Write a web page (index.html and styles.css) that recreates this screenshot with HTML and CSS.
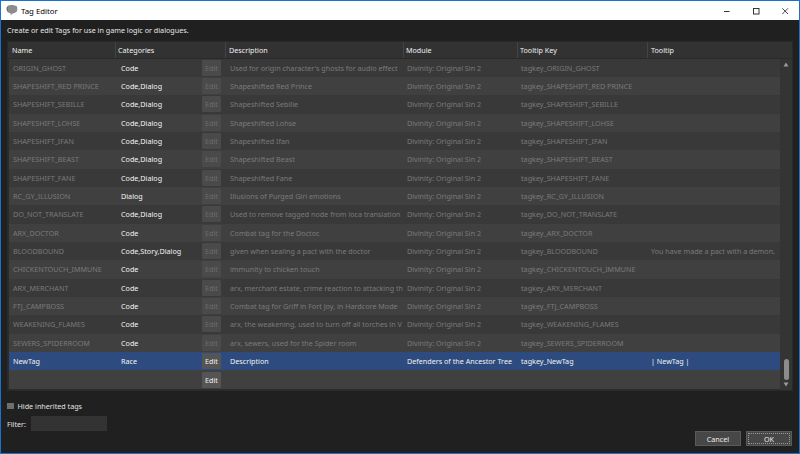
FILE: index.html
```html
<!DOCTYPE html>
<html>
<head>
<meta charset="utf-8">
<link rel="stylesheet" href="styles.css">
</head>
<body>
<div class="window">
  <div class="titlebar">
    <svg class="appicon" width="12" height="12" viewBox="0 0 12 12"><path d="M2 1.5 C4 0.5 8 0.8 10.5 2 C11.6 3 11.5 6 10.8 7.6 C10 9 8 9.2 6.5 9.4 L4.8 11.2 L4.6 9.3 C3 9 1.2 8.4 0.8 6.8 C0.3 4.8 0.6 2.5 2 1.5 Z" fill="#8c8c8c"/><path d="M1.4 3 C1 4.2 1.2 6 1.8 7" stroke="#5f5f5f" stroke-width="0.8" fill="none"/></svg>
    <span class="title">Tag Editor</span>
    <div class="controls">
      <div class="ctl"><svg width="10" height="10" viewBox="0 0 10 10"><path d="M2 5.5 H7.5" stroke="#333" stroke-width="1"/></svg></div>
      <div class="ctl"><svg width="10" height="10" viewBox="0 0 10 10"><rect x="2.5" y="2.5" width="5.5" height="5.5" stroke="#333" stroke-width="1" fill="none"/></svg></div>
      <div class="ctl"><svg width="10" height="10" viewBox="0 0 10 10"><path d="M2.3 2.3 L8 8 M8 2.3 L2.3 8" stroke="#333" stroke-width="0.9"/></svg></div>
    </div>
  </div>
  <div class="content">
    <div class="intro">Create or edit Tags for use in game logic or dialogues.</div>
    <div class="grid">
      <div class="header">
        <div class="h h-name">Name</div>
        <div class="h h-cat">Categories</div>
        <div class="h h-desc">Description</div>
        <div class="h h-mod">Module</div>
        <div class="h h-key">Tooltip Key</div>
        <div class="h h-tip">Tooltip</div>
      </div>
      <div class="body">
        <div class="rows">
          <div class="row"><div class="c c-name">ORIGIN_GHOST</div><div class="c c-cat">Code</div><div class="c-edit"><span class="btn-edit">Edit</span></div><div class="c c-desc">Used for origin character's ghosts for audio effect</div><div class="c c-mod">Divinity: Original Sin 2</div><div class="c c-key">tagkey_ORIGIN_GHOST</div><div class="c c-tip"></div></div>
          <div class="row"><div class="c c-name">SHAPESHIFT_RED PRINCE</div><div class="c c-cat">Code,Dialog</div><div class="c-edit"><span class="btn-edit">Edit</span></div><div class="c c-desc">Shapeshifted Red Prince</div><div class="c c-mod">Divinity: Original Sin 2</div><div class="c c-key">tagkey_SHAPESHIFT_RED PRINCE</div><div class="c c-tip"></div></div>
          <div class="row"><div class="c c-name">SHAPESHIFT_SEBILLE</div><div class="c c-cat">Code,Dialog</div><div class="c-edit"><span class="btn-edit">Edit</span></div><div class="c c-desc">Shapeshifted Sebille</div><div class="c c-mod">Divinity: Original Sin 2</div><div class="c c-key">tagkey_SHAPESHIFT_SEBILLE</div><div class="c c-tip"></div></div>
          <div class="row"><div class="c c-name">SHAPESHIFT_LOHSE</div><div class="c c-cat">Code,Dialog</div><div class="c-edit"><span class="btn-edit">Edit</span></div><div class="c c-desc">Shapeshifted Lohse</div><div class="c c-mod">Divinity: Original Sin 2</div><div class="c c-key">tagkey_SHAPESHIFT_LOHSE</div><div class="c c-tip"></div></div>
          <div class="row"><div class="c c-name">SHAPESHIFT_IFAN</div><div class="c c-cat">Code,Dialog</div><div class="c-edit"><span class="btn-edit">Edit</span></div><div class="c c-desc">Shapeshifted Ifan</div><div class="c c-mod">Divinity: Original Sin 2</div><div class="c c-key">tagkey_SHAPESHIFT_IFAN</div><div class="c c-tip"></div></div>
          <div class="row"><div class="c c-name">SHAPESHIFT_BEAST</div><div class="c c-cat">Code,Dialog</div><div class="c-edit"><span class="btn-edit">Edit</span></div><div class="c c-desc">Shapeshifted Beast</div><div class="c c-mod">Divinity: Original Sin 2</div><div class="c c-key">tagkey_SHAPESHIFT_BEAST</div><div class="c c-tip"></div></div>
          <div class="row"><div class="c c-name">SHAPESHIFT_FANE</div><div class="c c-cat">Code,Dialog</div><div class="c-edit"><span class="btn-edit">Edit</span></div><div class="c c-desc">Shapeshifted Fane</div><div class="c c-mod">Divinity: Original Sin 2</div><div class="c c-key">tagkey_SHAPESHIFT_FANE</div><div class="c c-tip"></div></div>
          <div class="row"><div class="c c-name">RC_GY_ILLUSION</div><div class="c c-cat">Dialog</div><div class="c-edit"><span class="btn-edit">Edit</span></div><div class="c c-desc">Illusions of Purged Girl emotions</div><div class="c c-mod">Divinity: Original Sin 2</div><div class="c c-key">tagkey_RC_GY_ILLUSION</div><div class="c c-tip"></div></div>
          <div class="row"><div class="c c-name">DO_NOT_TRANSLATE</div><div class="c c-cat">Code,Dialog</div><div class="c-edit"><span class="btn-edit">Edit</span></div><div class="c c-desc">Used to remove tagged node from loca translation</div><div class="c c-mod">Divinity: Original Sin 2</div><div class="c c-key">tagkey_DO_NOT_TRANSLATE</div><div class="c c-tip"></div></div>
          <div class="row"><div class="c c-name">ARX_DOCTOR</div><div class="c c-cat">Code</div><div class="c-edit"><span class="btn-edit">Edit</span></div><div class="c c-desc">Combat tag for the Doctor.</div><div class="c c-mod">Divinity: Original Sin 2</div><div class="c c-key">tagkey_ARX_DOCTOR</div><div class="c c-tip"></div></div>
          <div class="row"><div class="c c-name">BLOODBOUND</div><div class="c c-cat">Code,Story,Dialog</div><div class="c-edit"><span class="btn-edit">Edit</span></div><div class="c c-desc">given when sealing a pact with the doctor</div><div class="c c-mod">Divinity: Original Sin 2</div><div class="c c-key">tagkey_BLOODBOUND</div><div class="c c-tip">You have made a pact with a demon.</div></div>
          <div class="row"><div class="c c-name">CHICKENTOUCH_IMMUNE</div><div class="c c-cat">Code</div><div class="c-edit"><span class="btn-edit">Edit</span></div><div class="c c-desc">immunity to chicken touch</div><div class="c c-mod">Divinity: Original Sin 2</div><div class="c c-key">tagkey_CHICKENTOUCH_IMMUNE</div><div class="c c-tip"></div></div>
          <div class="row"><div class="c c-name">ARX_MERCHANT</div><div class="c c-cat">Code</div><div class="c-edit"><span class="btn-edit">Edit</span></div><div class="c c-desc">arx, merchant estate, crime reaction to attacking th</div><div class="c c-mod">Divinity: Original Sin 2</div><div class="c c-key">tagkey_ARX_MERCHANT</div><div class="c c-tip"></div></div>
          <div class="row"><div class="c c-name">FTJ_CAMPBOSS</div><div class="c c-cat">Code</div><div class="c-edit"><span class="btn-edit">Edit</span></div><div class="c c-desc">Combat tag for Griff in Fort Joy, in Hardcore Mode</div><div class="c c-mod">Divinity: Original Sin 2</div><div class="c c-key">tagkey_FTJ_CAMPBOSS</div><div class="c c-tip"></div></div>
          <div class="row"><div class="c c-name">WEAKENING_FLAMES</div><div class="c c-cat">Code</div><div class="c-edit"><span class="btn-edit">Edit</span></div><div class="c c-desc">arx, the weakening, used to turn off all torches in V</div><div class="c c-mod">Divinity: Original Sin 2</div><div class="c c-key">tagkey_WEAKENING_FLAMES</div><div class="c c-tip"></div></div>
          <div class="row"><div class="c c-name">SEWERS_SPIDERROOM</div><div class="c c-cat">Code</div><div class="c-edit"><span class="btn-edit">Edit</span></div><div class="c c-desc">arx, sewers, used for the Spider room</div><div class="c c-mod">Divinity: Original Sin 2</div><div class="c c-key">tagkey_SEWERS_SPIDERROOM</div><div class="c c-tip"></div></div>
          <div class="row selected"><div class="c c-name">NewTag</div><div class="c c-cat">Race</div><div class="c-edit"><span class="btn-edit on">Edit</span></div><div class="c c-desc">Description</div><div class="c c-mod">Defenders of the Ancestor Tree</div><div class="c c-key">tagkey_NewTag</div><div class="c c-tip">| NewTag |</div></div>
          <div class="row"><div class="c c-name"></div><div class="c c-cat"></div><div class="c-edit"><span class="btn-edit on">Edit</span></div><div class="c c-desc"></div><div class="c c-mod"></div><div class="c c-key"></div><div class="c c-tip"></div></div>
        </div>
        <div class="scrollbar">
          <svg class="arrow" width="6" height="5" viewBox="0 0 6 5"><path d="M3 0.5 L5.5 4.5 H0.5 Z" fill="#9a9a9a"/></svg>
          <div class="track"><div class="thumb"></div></div>
          <svg class="arrow" width="6" height="5" viewBox="0 0 6 5"><path d="M0.5 0.5 H5.5 L3 4.5 Z" fill="#9a9a9a"/></svg>
        </div>
      </div>
    </div>
    <div class="check"><span class="box"></span><span>Hide inherited tags</span></div>
    <div class="filter"><span>Filter:</span><span class="input"></span></div>
    <div class="buttons"><span class="btn">Cancel</span><span class="btn ok"><span class="focus">OK</span></span></div>
  </div>
</div>
</body>
</html>
```

FILE: styles.css
```css
* { box-sizing: border-box; }
html, body { margin: 0; padding: 0; }
body {
  width: 800px;
  height: 454px;
  overflow: hidden;
  font-family: "Noto Sans", "Open Sans", sans-serif;
  font-size: 7.2px;
  background: #1f1f1f;
}
.window {
  width: 800px;
  height: 454px;
  border: 1px solid #1a73c9;
  background: #202020;
  display: flex;
  flex-direction: column;
}
.titlebar {
  height: 19px;
  background: #ffffff;
  display: flex;
  align-items: center;
  flex: none;
}
.appicon { margin-left: 5px; margin-top: -1px; }
.title {
  margin-left: 3px;
  color: #000;
  font-size: 7.8px;
}
.controls { margin-left: auto; display: flex; height: 19px; }
.ctl {
  width: 29px;
  height: 19px;
  display: flex;
  align-items: center;
  justify-content: center;
}
.content {
  flex: 1;
  padding: 0 6px 0 6px;
  display: flex;
  flex-direction: column;
}
.intro {
  height: 21px;
  line-height: 21px;
  color: #e6e6e6;
  flex: none;
}
.grid {
  height: 350px;
  border: 1px solid #2a2a2a;
  background: #2c2c2c;
  display: flex;
  flex-direction: column;
  flex: none;
}
.header {
  height: 16.5px;
  display: flex;
  background: #323232;
  border-bottom: 1px solid #2a2a2a;
  color: #f0f0f0;
  flex: none;
}
.h {
  line-height: 16px;
  border-left: 1px solid #444;
  white-space: nowrap;
  overflow: hidden;
}
.h-name { width: 107px; padding-left: 4px; border-left: none; }
.h-cat { width: 110px; padding-left: 2px; }
.h-desc { width: 178px; padding-left: 3px; }
.h-mod { width: 114px; padding-left: 2px; }
.h-key { width: 130px; padding-left: 2px; }
.h-tip { flex: 1; padding-left: 3px; }
.body {
  flex: 1;
  display: flex;
}
.rows {
  width: 772px;
  padding-left: 1px;
}
.row {
  height: 18.35px;
  display: flex;
  align-items: center;
  background: #393939;
  color: #7a7a7a;
}
.row:nth-child(even) { background: #404040; }
.row.selected { background: #2d4b7e; color: #f2f2f2; }
.c {
  white-space: nowrap;
  overflow: hidden;
  line-height: 18px;
  height: 18px;
}
.c-name { width: 106px; padding-left: 4px; }
.c-cat { width: 87px; padding-left: 6px; color: #f4f4f4; }
.c-edit { width: 23px; height: 18px; display: flex; align-items: center; }
.c-desc { width: 178px; padding-left: 5px; }
.c-mod { width: 114px; padding-left: 4px; }
.c-key { width: 130px; padding-left: 4px; }
.c-tip { flex: 1; padding-left: 4px; }
.btn-edit {
  width: 19px;
  height: 16px;
  background: #4a4a4a;
  color: #6d6d6d;
  display: flex;
  align-items: center;
  justify-content: center;
  border-radius: 1px;
}
.btn-edit.on { background: #555555; color: #f2f2f2; }
.scrollbar {
  flex: 1;
  background: #343434;
  display: flex;
  flex-direction: column;
  align-items: center;
  padding: 3px 0 3px 0;
}
.arrow { flex: none; }
.track {
  flex: 1;
  width: 100%;
  display: flex;
  flex-direction: column;
  justify-content: flex-end;
  align-items: center;
  padding-bottom: 2px;
}
.thumb {
  width: 5px;
  height: 21px;
  border-radius: 2.5px;
  background: #8c8c8c;
}
.check {
  margin-top: 9px;
  height: 12px;
  display: flex;
  align-items: center;
  color: #e2e2e2;
  flex: none;
}
.box {
  width: 6.5px;
  height: 6.5px;
  background: #6e6e6e;
  margin-right: 4px;
}
.filter {
  margin-top: 4px;
  height: 15px;
  display: flex;
  align-items: center;
  color: #e2e2e2;
  flex: none;
}
.input {
  margin-left: 5px;
  width: 76px;
  height: 15px;
  background: #333333;
}
.buttons {
  display: flex;
  justify-content: flex-end;
  gap: 5px;
  padding-right: 1px;
  flex: none;
}
.btn {
  width: 46px;
  height: 15px;
  background: #474747;
  border: 1px solid #5a5a5a;
  color: #ececec;
  display: flex;
  align-items: center;
  justify-content: center;
}
.ok { padding: 1px; }
.focus {
  width: 100%;
  height: 100%;
  border: 1px dotted #9a9a9a;
  display: flex;
  align-items: center;
  justify-content: center;
}
```
